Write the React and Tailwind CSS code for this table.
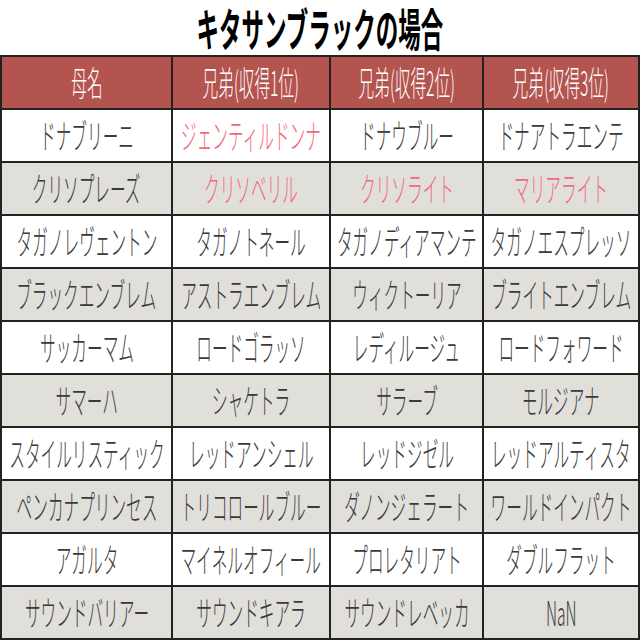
import React from "react";

const rows = [
  ["ドナブリーニ", "ジェンティルドンナ", "ドナウブルー", "ドナアトラエンテ"],
  ["クリソプレーズ", "クリソベリル", "クリソライト", "マリアライト"],
  ["タガノレヴェントン", "タガノトネール", "タガノディアマンテ", "タガノエスプレッソ"],
  ["ブラックエンブレム", "アストラエンブレム", "ウィクトーリア", "ブライトエンブレム"],
  ["サッカーマム", "ロードゴラッソ", "レディルージュ", "ロードフォワード"],
  ["サマーハ", "シャケトラ", "サラーブ", "モルジアナ"],
  ["スタイルリスティック", "レッドアンシェル", "レッドジゼル", "レッドアルティスタ"],
  ["ペンカナプリンセス", "トリコロールブルー", "ダノンジェラート", "ワールドインパクト"],
  ["アガルタ", "マイネルオフィール", "プロレタリアト", "ダブルフラット"],
  ["サウンドバリアー", "サウンドキアラ", "サウンドレベッカ", "NaN"],
];

const pink = new Set(["0-1", "1-1", "1-2", "1-3"]);

const font = { fontFamily: '"Noto Sans CJK JP", "Noto Sans", sans-serif' };

function Cell({ children, bg, color }) {
  return (
    <div className={`h-[51px] flex items-center justify-center ${bg}`}>
      <span
        className={`inline-block whitespace-nowrap text-[34px] leading-tight font-light scale-x-[0.46] ${color}`}
        style={font}
      >
        {children}
      </span>
    </div>
  );
}

export default function App() {
  return (
    <div className="w-[640px] h-[640px] bg-white overflow-hidden">
      <div className="h-[55px] flex items-center justify-center">
        <span
          className="inline-block whitespace-nowrap text-[45px] leading-tight font-bold text-black scale-x-[0.5] mt-[1px]"
          style={font}
        >
          キタサンブラックの場合
        </span>
      </div>
      <div className="grid grid-cols-[169px_156px_151px_154px] gap-[2px] p-[2px] bg-[#222222]">
        {["母名", "兄弟(収得1位)", "兄弟(収得2位)", "兄弟(収得3位)"].map((h) => (
          <Cell key={h} bg="bg-[#b3544f]" color="text-white">
            {h}
          </Cell>
        ))}
        {rows.map((r, i) =>
          r.map((c, j) => (
            <Cell
              key={`${i}-${j}`}
              bg={i % 2 === 0 ? "bg-white" : "bg-[#e1dfda]"}
              color={pink.has(`${i}-${j}`) ? "text-[#f06a7a]" : "text-[#3a3a3a]"}
            >
              {c}
            </Cell>
          ))
        )}
      </div>
    </div>
  );
}
